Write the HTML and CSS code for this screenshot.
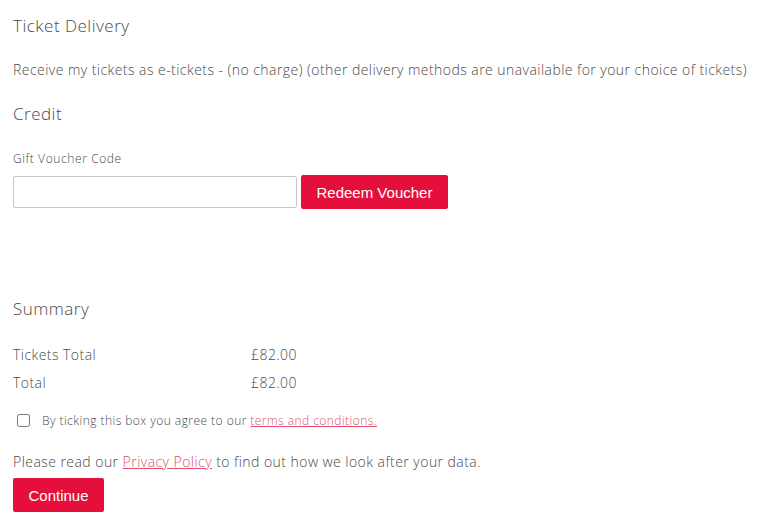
FILE: index.html
```html
<!DOCTYPE html>
<html lang="en">
<head>
  <meta charset="UTF-8">
  <meta name="viewport" content="width=device-width, initial-scale=1.0">
  <title>Checkout</title>
  <link rel="stylesheet" href="styles.css">
</head>
<body>
  <div class="checkout">
    <section class="delivery">
      <h2>Ticket Delivery</h2>
      <p>Receive my tickets as e-tickets - (no charge) (other delivery methods are unavailable for your choice of tickets)</p>
    </section>

    <section class="credit">
      <h2>Credit</h2>
      <label for="voucher">Gift Voucher Code</label>
      <div class="voucher-row">
        <input type="text" id="voucher" name="voucher">
        <button type="button" class="btn">Redeem Voucher</button>
      </div>
    </section>

    <section class="summary">
      <h2>Summary</h2>
      <div class="totals">
        <span>Tickets Total</span><span>&pound;82.00</span>
        <span>Total</span><span>&pound;82.00</span>
      </div>
      <label class="terms">
        <input type="checkbox" name="terms">
        <span>By ticking this box you agree to our <a href="#">terms and conditions.</a></span>
      </label>
      <p class="privacy">Please read our <a href="#">Privacy Policy</a> to find out how we look after your data.</p>
      <button type="submit" class="btn">Continue</button>
    </section>
  </div>
</body>
</html>
```

FILE: styles.css
```css
body {
  font-family: 'Open Sans', Lato, sans-serif;
  font-weight: 300;
  color: #4a4a4a;
  letter-spacing: 0.45px;
  margin: 0;
  padding: 0 13px;
  background: #fff;
}
h2 {
  font-size: 17px;
  font-weight: 300;
  line-height: 24px;
  letter-spacing: 0.5px;
  margin: 0;
}
p {
  font-size: 14px;
  line-height: 20px;
  margin: 0;
}
a {
  color: #e0516f;
}
.delivery {
  padding-top: 14px;
}
.delivery p {
  margin-top: 22px;
}
.credit {
  margin-top: 22px;
}
.credit label {
  display: block;
  font-size: 12px;
  letter-spacing: 0.6px;
  margin-top: 25px;
  line-height: 16px;
}
.voucher-row {
  display: flex;
  align-items: center;
  gap: 4px;
  margin-top: 8px;
}
.voucher-row input {
  width: 284px;
  height: 32px;
  box-sizing: border-box;
  border: 1px solid #c8c8c8;
  border-radius: 2px;
  padding: 0 8px;
  margin: 0;
}
.btn {
  background-color: #e4103b;
  color: #fff;
  border: none;
  border-radius: 2px;
  font-family: 'Liberation Sans', Arial, sans-serif;
  font-size: 15px;
  letter-spacing: 0;
  height: 34px;
  padding: 0 15.5px;
  cursor: pointer;
}
.summary {
  margin-top: 88px;
}
.totals {
  display: grid;
  grid-template-columns: 238px auto;
  row-gap: 8px;
  font-size: 14px;
  line-height: 20px;
  margin-top: 24px;
}
.terms {
  display: flex;
  align-items: center;
  gap: 12px;
  font-size: 12px;
  letter-spacing: 0.45px;
  margin-top: 19px;
}
.terms input {
  margin: 0 0 0 4px;
  width: 13px;
  height: 13px;
}
.privacy {
  margin-top: 23px;
}
.summary .btn {
  margin-top: 6px;
}
```
